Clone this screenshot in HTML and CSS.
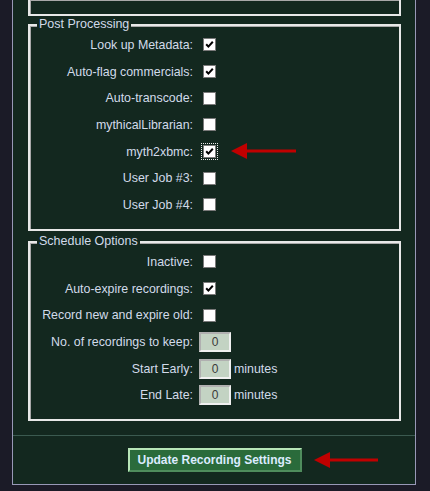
FILE: index.html
```html
<!DOCTYPE html>
<html>
<head>
<meta charset="utf-8">
<link rel="stylesheet" href="styles.css">
</head>
<body>
<div class="panel">
  <div class="content">
    <div class="group group-top"></div>

    <div class="group group-post">
      <span class="legend">Post Processing</span>
      <div class="rows">
        <label class="lbl">Look up Metadata:</label>
        <div class="ctl"><span class="cb"><svg viewBox="0 0 11 11" class="tick"><path d="M2.2 5.2 L4.4 7.6 L8.8 2.8"/></svg></span></div>
        <label class="lbl">Auto-flag commercials:</label>
        <div class="ctl"><span class="cb"><svg viewBox="0 0 11 11" class="tick"><path d="M2.2 5.2 L4.4 7.6 L8.8 2.8"/></svg></span></div>
        <label class="lbl">Auto-transcode:</label>
        <div class="ctl"><span class="cb"></span></div>
        <label class="lbl">mythicalLibrarian:</label>
        <div class="ctl"><span class="cb"></span></div>
        <label class="lbl">myth2xbmc:</label>
        <div class="ctl"><span class="cb focus"><svg viewBox="0 0 11 11" class="tick"><path d="M2.2 5.2 L4.4 7.6 L8.8 2.8"/></svg></span></div>
        <label class="lbl">User Job #3:</label>
        <div class="ctl"><span class="cb"></span></div>
        <label class="lbl">User Job #4:</label>
        <div class="ctl"><span class="cb"></span></div>
      </div>
    </div>

    <div class="group group-sched">
      <span class="legend">Schedule Options</span>
      <div class="rows">
        <label class="lbl">Inactive:</label>
        <div class="ctl"><span class="cb"></span></div>
        <label class="lbl">Auto-expire recordings:</label>
        <div class="ctl"><span class="cb"><svg viewBox="0 0 11 11" class="tick"><path d="M2.2 5.2 L4.4 7.6 L8.8 2.8"/></svg></span></div>
        <label class="lbl">Record new and expire old:</label>
        <div class="ctl"><span class="cb"></span></div>
        <label class="lbl">No. of recordings to keep:</label>
        <div class="ctl"><span class="num">0</span></div>
        <label class="lbl">Start Early:</label>
        <div class="ctl"><span class="num">0</span><span class="unit">minutes</span></div>
        <label class="lbl">End Late:</label>
        <div class="ctl"><span class="num">0</span><span class="unit">minutes</span></div>
      </div>
    </div>
  </div>

  <div class="footer">
    <button class="btn">Update Recording Settings</button>
  </div>

  <svg class="arrow arrow-1" viewBox="0 0 66 16" width="66" height="16"><path d="M0 8 L16 0 L16 6.5 L65 6.5 L65 9.5 L16 9.5 L16 16 Z"/></svg>
  <svg class="arrow arrow-2" viewBox="0 0 65 16" width="65" height="16"><path d="M0 8 L16 0 L16 6.5 L64 6.5 L64 9.5 L16 9.5 L16 16 Z"/></svg>
</div>
</body>
</html>
```
FILE: styles.css
```css
html, body {
  margin: 0;
  padding: 0;
  background: #1b1b27;
  height: 491px;
  overflow: hidden;
}

body {
  font-family: "Liberation Sans", Arial, sans-serif;
  font-size: 12px;
  color: #d2dbea;
}

.panel {
  position: relative;
  margin-left: 12px;
  width: 402px;
  background: #13281f;
  border: 1px solid #9898b6;
  border-top: none;
}

.content {
  padding: 0 14px 0 15px;
}

.group {
  position: relative;
  border: 2px solid #e8e8e8;
  box-shadow: inset 1px 1px 0 #a8a8a8;
}

.group-top {
  height: 14px;
  border-top: none;
}

.group-post {
  margin-top: 8px;
  padding: 5.67px 0 10.67px;
}

.group-sched {
  margin-top: 10px;
  padding: 5.67px 0 10.67px;
}

.legend {
  position: absolute;
  top: -9px;
  left: 7px;
  padding: 0 2px;
  background: #13281f;
  font-size: 12.5px;
  line-height: 15px;
  color: #d2dbea;
}

.rows {
  display: grid;
  grid-template-columns: 163px auto;
  grid-auto-rows: 26.67px;
  column-gap: 6px;
  align-items: center;
}

.lbl {
  text-align: right;
  white-space: nowrap;
  font-size: 12.4px;
}

.ctl {
  display: flex;
  align-items: center;
}

.cb {
  position: relative;
  margin-left: 4px;
  width: 11px;
  height: 11px;
  background: #fff;
  border: 1px solid #7a7a7a;
  display: flex;
  align-items: center;
  justify-content: center;
}

.cb.focus {
  outline: 1px dotted #e8e8e8;
  outline-offset: 1px;
}

.tick {
  width: 11px;
  height: 11px;
}

.tick path {
  fill: none;
  stroke: #000;
  stroke-width: 2;
}

.num {
  width: 28px;
  height: 16px;
  background: #c3d3c3;
  border: 2px solid;
  border-color: #b0b0b0 #f0f0f0 #f0f0f0 #b0b0b0;
  color: #3a3a3a;
  text-align: center;
  line-height: 16px;
  font-size: 12px;
}

.unit {
  margin-left: 3px;
  font-size: 12.4px;
}

.footer {
  margin-top: 13.67px;
  border-top: 1px solid #3b5a50;
  padding: 12px 0 12px;
  display: flex;
  justify-content: center;
}

.btn {
  margin-left: 1px;
  width: 174px;
  height: 24px;
  background: #2a6b3b;
  border: 2px solid;
  border-color: #b8e6b8 #4f8c5d #4f8c5d #b8e6b8;
  color: #dcecff;
  font-family: "Liberation Sans", Arial, sans-serif;
  font-weight: bold;
  font-size: 12px;
  padding: 0;
}

.arrow {
  position: absolute;
  fill: #c00000;
}

.arrow-1 {
  left: 218px;
  top: 143px;
}

.arrow-2 {
  left: 301px;
  top: 452px;
}
```
